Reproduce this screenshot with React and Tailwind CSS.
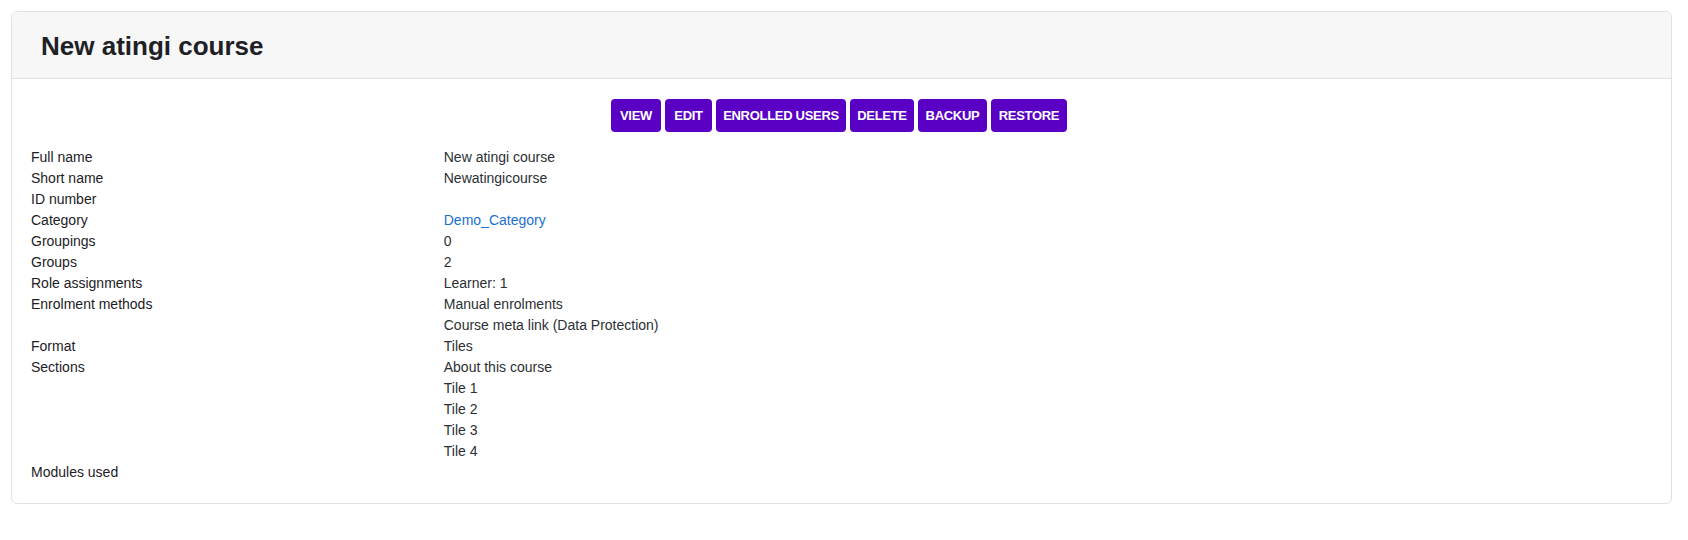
import React from "react";

const rows = [
  { label: "Full name", values: ["New atingi course"] },
  { label: "Short name", values: ["Newatingicourse"] },
  { label: "ID number", values: [""] },
  { label: "Category", values: ["Demo_Category"], link: true },
  { label: "Groupings", values: ["0"] },
  { label: "Groups", values: ["2"] },
  { label: "Role assignments", values: ["Learner: 1"] },
  { label: "Enrolment methods", values: ["Manual enrolments", "Course meta link (Data Protection)"] },
  { label: "Format", values: ["Tiles"] },
  { label: "Sections", values: ["About this course", "Tile 1", "Tile 2", "Tile 3", "Tile 4"] },
  { label: "Modules used", values: [""] },
];

const buttons = [
  { t: "VIEW", w: "w-[50px]" },
  { t: "EDIT", w: "w-[47px]" },
  { t: "ENROLLED USERS", w: "w-[130px]" },
  { t: "DELETE", w: "w-[64px]" },
  { t: "BACKUP", w: "w-[69px]" },
  { t: "RESTORE", w: "w-[76px]" },
];

export default function App() {
  return (
    <div
      className="min-h-[540px] bg-white pt-[11px] pl-[11px] pr-[16px]"
      style={{ fontFamily: '"Liberation Sans", Arial, sans-serif' }}
    >
      <div className="rounded-md border border-[#dee2e6] bg-white overflow-hidden">
        <div className="h-[67px] flex items-center bg-[#f7f7f7] border-b border-[#dee2e6] pl-[29px]">
          <h2 className="text-[26px] leading-[30px] font-bold text-[#1d2125] mt-[1px]">New atingi course</h2>
        </div>
        <div className="px-[19px] pt-[20px] pb-[20px]">
          <div className="flex justify-center gap-1 mb-[15px] pr-[5px]">
            {buttons.map((b) => (
              <button
                key={b.t}
                className={`${b.w} h-[33px] rounded bg-[#5a00c4] text-white text-[13px] font-bold tracking-[-0.3px] leading-[18px] text-center`}
              >
                {b.t}
              </button>
            ))}
          </div>
          <div className="text-[14px] leading-[21px]">
            {rows.map((r) => (
              <div key={r.label} className="flex -mx-[15px]">
                <div className="w-1/4 px-[15px] text-[#1d2125]">{r.label}</div>
                <div className="w-3/4 px-[15px] text-[#2b2f33]">
                  {r.values.map((v, i) => (
                    <div key={i} className="h-[21px]">
                      {r.link ? (
                        <a href="#" className="text-[#1a6fd1]">{v}</a>
                      ) : (
                        v
                      )}
                    </div>
                  ))}
                </div>
              </div>
            ))}
          </div>
        </div>
      </div>
    </div>
  );
}
